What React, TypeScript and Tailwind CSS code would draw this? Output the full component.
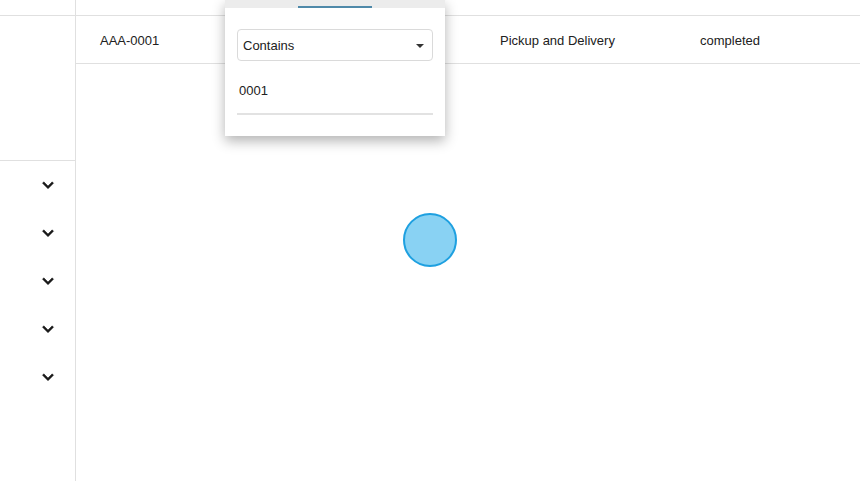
import React from "react";

const ExpandMore = () => (
  <svg width="22" height="22" viewBox="0 0 24 24" fill="#1a1a1a" stroke="#1a1a1a" strokeWidth="0.6">
    <path d="M16.59 8.59L12 13.17 7.41 8.59 6 10l6 6 6-6z" />
  </svg>
);

const App = () => {
  const sections = [1, 2, 3, 4, 5];

  return (
    <div
      className="relative flex h-[481px] w-[860px] overflow-hidden bg-white text-[13px] text-[#212121]"
      style={{ fontFamily: '"Liberation Sans", Arial, sans-serif' }}
    >
      {/* sidebar */}
      <div className="flex w-[76px] shrink-0 flex-col border-r border-[#e0e0e0]">
        <div className="h-[16px] border-b border-[#e0e0e0]" />
        <div className="h-[145px] border-b border-[#e0e0e0]" />
        {sections.map((s) => (
          <div key={s} className="flex h-[48px] items-center justify-end pr-[16px]">
            <ExpandMore />
          </div>
        ))}
      </div>

      {/* table */}
      <div className="flex flex-1 flex-col">
        <div className="h-[16px] border-b border-[#e0e0e0]" />
        <div className="flex h-[48px] items-center border-b border-[#e0e0e0] pl-[24px] pt-[2px]">
          <div className="w-[400px]">AAA-0001</div>
          <div className="w-[200px]">Pickup and Delivery</div>
          <div>completed</div>
        </div>
      </div>

      {/* filter popup */}
      <div className="absolute left-[225px] top-0 w-[220px] bg-white shadow-[0_5px_12px_rgba(0,0,0,0.3)]">
        <div className="relative h-[8px] bg-[#ececec]">
          <div className="absolute bottom-0 left-[73px] h-[2px] w-[74px] bg-[#4f89a9]" />
        </div>
        <div className="px-[12px] pb-[21px] pt-[21px]">
          <div className="flex h-[32px] items-center justify-between rounded-[4px] border border-[#dadada] pl-[5px] pr-[8px] pt-[1px]">
            <span>Contains</span>
            <span className="h-0 w-0 border-x-[4px] border-t-[4px] border-x-transparent border-t-[#333]" />
          </div>
          <div className="flex h-[52px] items-end pl-[2px] pb-[13px]">0001</div>
          <div className="h-[2px] bg-[#e2e2e2]" />
        </div>
      </div>

      {/* loading indicator */}
      <div className="absolute left-[403px] top-[213px] h-[54px] w-[54px] rounded-full border-2 border-[#1ea0e0] bg-[#89d2f3]" />
    </div>
  );
};

export default App;
